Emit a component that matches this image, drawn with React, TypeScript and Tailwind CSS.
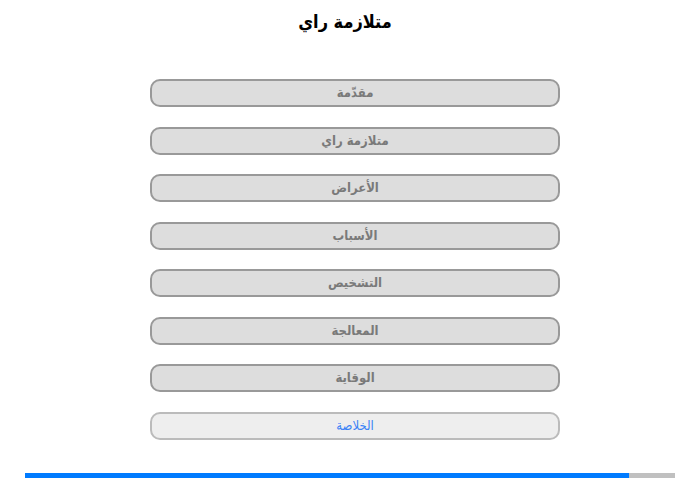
import React from "react";

const items = [
  "مقدّمة",
  "متلازمة راي",
  "الأعراض",
  "الأسباب",
  "التشخيص",
  "المعالجة",
  "الوقاية",
];

export default function App() {
  return (
    <div
      dir="rtl"
      className="w-[700px] h-[480px] bg-white flex flex-col items-center overflow-hidden"
      style={{ fontFamily: '"DejaVu Sans Condensed", "DejaVu Sans", sans-serif' }}
    >
      <h1 className="mt-[10px] mr-[10px] h-[24px] leading-[24px] text-[18px] font-bold text-black">
        متلازمة راي
      </h1>
      <div className="mt-[45px] ml-[10px] flex flex-col gap-[19.5px] w-[410px]">
        {items.map((t) => (
          <div
            key={t}
            className="h-[28px] rounded-[10px] border-2 border-[#999999] bg-[#dddddd] flex items-center justify-center text-[13px] font-bold text-[#7a7a7a]"
          >
            {t}
          </div>
        ))}
        <div className="h-[28px] rounded-[10px] border-2 border-[#bbbbbb] bg-[#eeeeee] flex items-center justify-center text-[13px] text-[#3b82f6]">
          الخلاصة
        </div>
      </div>
      <div dir="ltr" className="mt-[33px] w-[650px] h-[5px] bg-[#c0c0c0] flex">
        <div className="w-[604px] h-full bg-[#007bff]" />
      </div>
    </div>
  );
}
